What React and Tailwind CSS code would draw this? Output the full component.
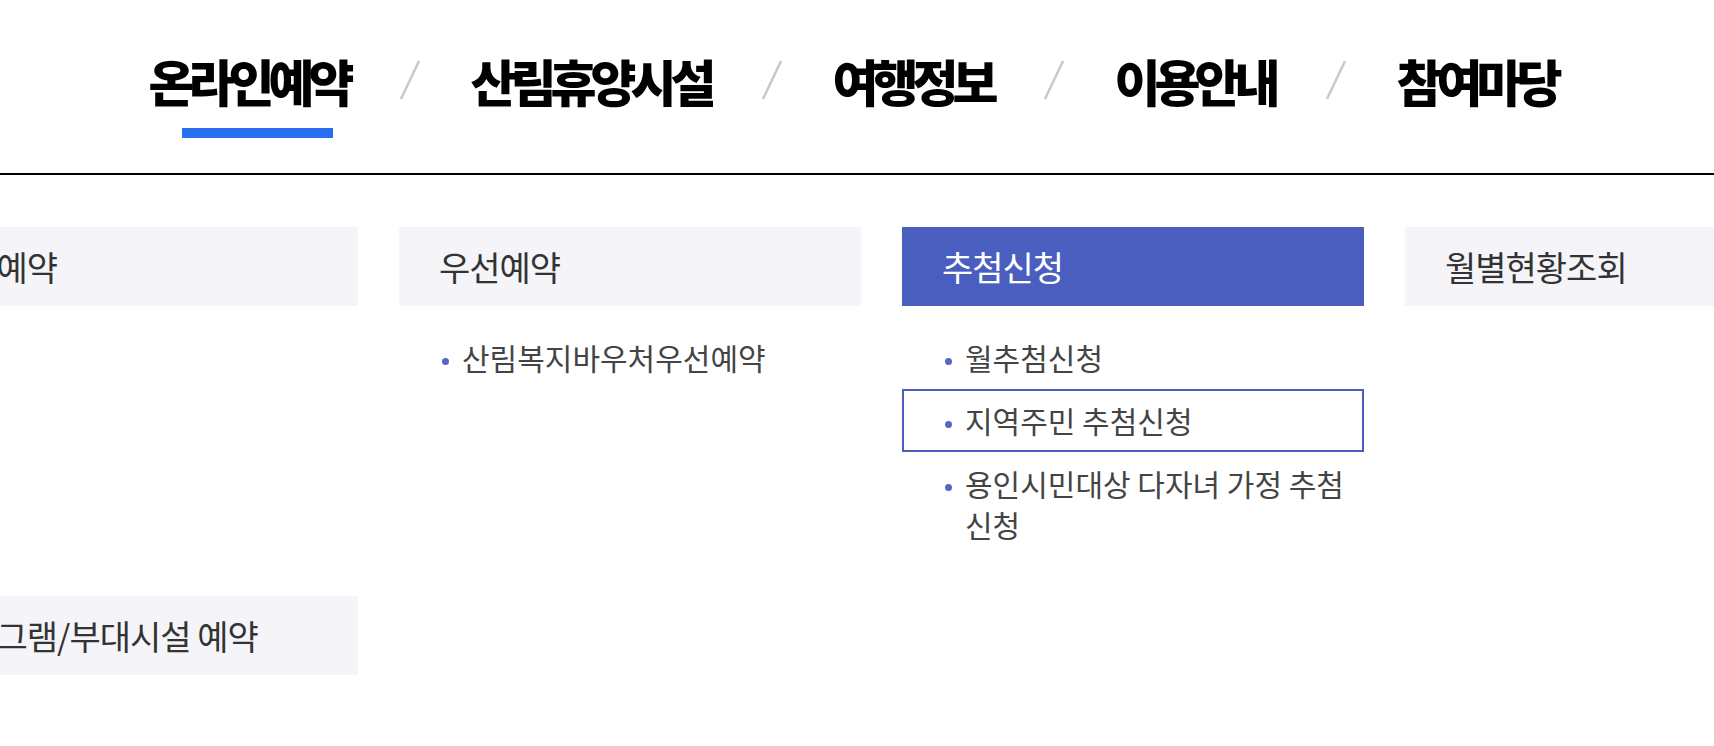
import React from 'react'

const navItems = ['온라인예약', '산림휴양시설', '여행정보', '이용안내', '참여마당'];

const menus = [
  { title: '일반예약', items: [] },
  { title: '우선예약', items: ['산림복지바우처우선예약'] },
  { title: '추첨신청', active: true, items: ['월추첨신청', '지역주민 추첨신청', '용인시민대상 다자녀 가정 추첨 신청'], focus: 1 },
  { title: '월별현황조회', items: [] },
  { title: '프로그램/부대시설 예약', items: [] },
];

const Slash = () => (
  <svg width="24" height="40" viewBox="0 0 24 40" className="mx-[49px] mt-[8px] shrink-0">
    <line x1="21" y1="1" x2="3" y2="39" stroke="#c9c9c9" strokeWidth="2.5" />
  </svg>
);

const App = () => {
  return (
    <div className="w-[1714px] h-[746px] overflow-hidden bg-white font-['Noto_Sans_CJK_KR',sans-serif]">
      {/* 상단 메뉴 */}
      <nav className="h-[175px] border-b-2 border-black flex justify-center">
        <ul className="flex items-start pt-[52px] pr-[9px]">
          {navItems.map((label, i) => (
            <React.Fragment key={label}>
              {i > 0 && <Slash />}
              <li className="relative">
                <a className="block text-[50px] leading-[56px] font-black tracking-[-6px] text-black">{label}</a>
                {i === 0 && (
                  <span className="absolute left-[33px] top-[76px] w-[151px] h-[10px] bg-[#276ef1]" />
                )}
              </li>
            </React.Fragment>
          ))}
        </ul>
      </nav>

      {/* 하위 메뉴 */}
      <div className="mt-[52px] ml-[-104px] w-[1971px] flex flex-wrap gap-x-[41px] gap-y-[40px]">
        {menus.map((m) => (
          <div key={m.title} className="w-[462px]">
            <div
              className={
                m.active
                  ? 'h-[79px] flex items-center pl-[40px] text-[34px] tracking-[-1px] bg-[#4a5ec0] text-white'
                  : 'h-[79px] flex items-center pl-[40px] text-[34px] tracking-[-1px] bg-[#f5f5f9] text-[#333]'
              }
            >
              {m.title}
            </div>
            {m.items.length > 0 && (
              <ul className="mt-[20px]">
                {m.items.map((it, j) => (
                  <li
                    key={it}
                    className={
                      j === m.focus
                        ? 'relative border-2 border-[#4a5ec0] py-[9px] pl-[61px] pr-[16px] text-[30px] leading-[41px] break-keep text-[#444]'
                        : 'relative border-2 border-transparent py-[9px] pl-[61px] pr-[16px] text-[30px] leading-[41px] break-keep text-[#444]'
                    }
                  >
                    <span className="absolute left-[41px] top-[30px] w-[7px] h-[7px] rounded-full bg-[#5566c4]" />
                    {it}
                  </li>
                ))}
              </ul>
            )}
          </div>
        ))}
      </div>
    </div>
  );
};

export default App
